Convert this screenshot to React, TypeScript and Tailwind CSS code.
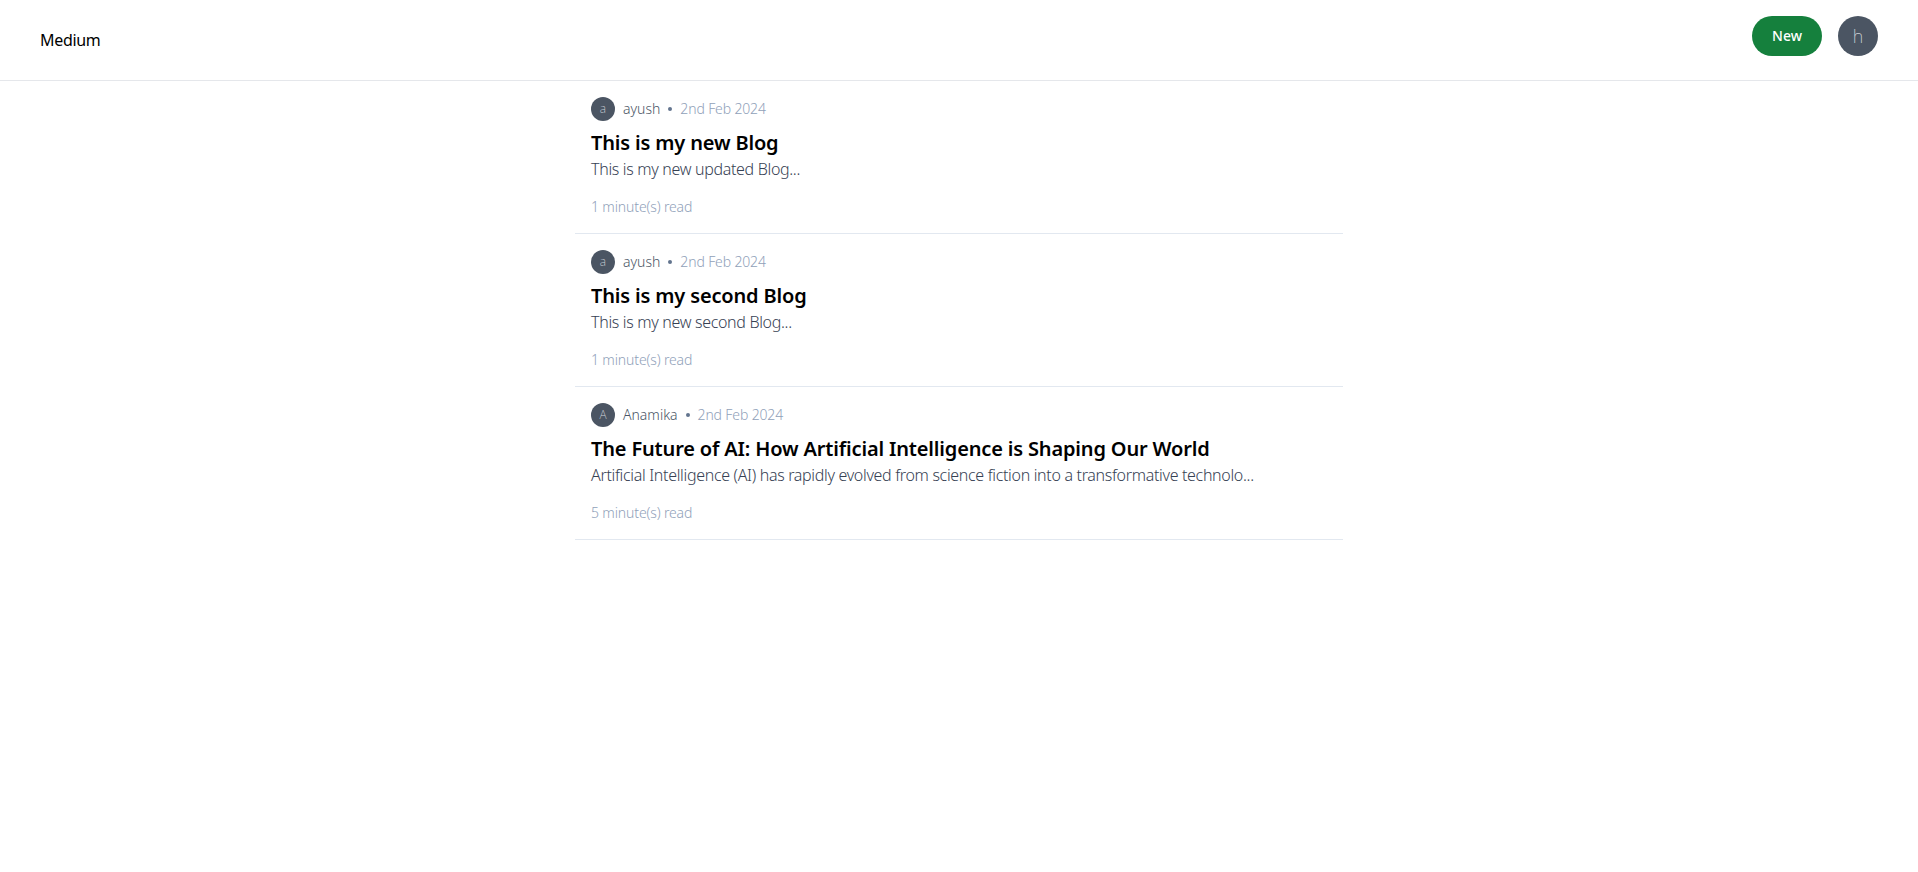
import React from 'react';

interface BlogCardProps {
    authorName: string;
    publishedDate: string;
    title: string;
    content: string;
    readTime: string;
}

const Avatar = ({ name, size = 'small' }: { name: string; size?: 'small' | 'big' }) => {
    return (
        <div className={`relative inline-flex items-center justify-center overflow-hidden bg-[#4b5563] rounded-full ${size === 'small' ? 'w-6 h-6' : 'w-10 h-10'}`}>
            <span className={`${size === 'small' ? 'text-xs' : 'text-lg'} font-extralight text-gray-300`}>
                {name[0]}
            </span>
        </div>
    );
};

const Circle = () => <div className="h-1 w-1 rounded-full bg-slate-500"></div>;

const BlogCard = ({ authorName, publishedDate, title, content, readTime }: BlogCardProps) => {
    return (
        <div className="p-4 border-b border-slate-200 w-screen max-w-screen-md cursor-pointer">
            <div className="flex">
                <Avatar name={authorName} />
                <div className="font-light text-gray-600 pl-2 text-sm flex justify-center flex-col">{authorName}</div>
                <div className="flex justify-center flex-col pl-2">
                    <Circle />
                </div>
                <div className="pl-2 font-light text-slate-400 text-sm flex justify-center flex-col tracking-[-0.01em]">{publishedDate}</div>
            </div>
            <div className="text-xl font-semibold pt-2 text-black tracking-[-0.008em]">{title}</div>
            <div className="text-base font-light text-gray-700 tracking-[-0.02em]">{content}</div>
            <div className="text-slate-400 text-sm font-light pt-4 tracking-[-0.01em]">{readTime}</div>
        </div>
    );
};

const blogs = [
    {
        authorName: 'ayush',
        publishedDate: '2nd Feb 2024',
        title: 'This is my new Blog',
        content: 'This is my new updated Blog...',
        readTime: '1 minute(s) read',
    },
    {
        authorName: 'ayush',
        publishedDate: '2nd Feb 2024',
        title: 'This is my second Blog',
        content: 'This is my new second Blog...',
        readTime: '1 minute(s) read',
    },
    {
        authorName: 'Anamika',
        publishedDate: '2nd Feb 2024',
        title: 'The Future of AI: How Artificial Intelligence is Shaping Our World',
        content: 'Artificial Intelligence (AI) has rapidly evolved from science fiction into a transformative technolo...',
        readTime: '5 minute(s) read',
    },
];

export default function App() {
    return (
        <div className="min-h-screen bg-white" style={{ fontFamily: '"Noto Sans", "Open Sans", sans-serif' }}>
            <div className="border-b border-gray-200 flex justify-between px-10 py-4">
                <div className="flex flex-col justify-center cursor-pointer text-black tracking-[-0.02em]">Medium</div>
                <div className="flex items-start gap-4 h-12">
                    <button type="button" className="h-10 text-white bg-[#15803d] font-medium rounded-full text-sm px-5 text-center">
                        New
                    </button>
                    <Avatar name="harkirat" size="big" />
                </div>
            </div>
            <div className="flex justify-center">
                <div>
                    {blogs.map((blog, idx) => (
                        <BlogCard key={idx} {...blog} />
                    ))}
                </div>
            </div>
        </div>
    );
}
